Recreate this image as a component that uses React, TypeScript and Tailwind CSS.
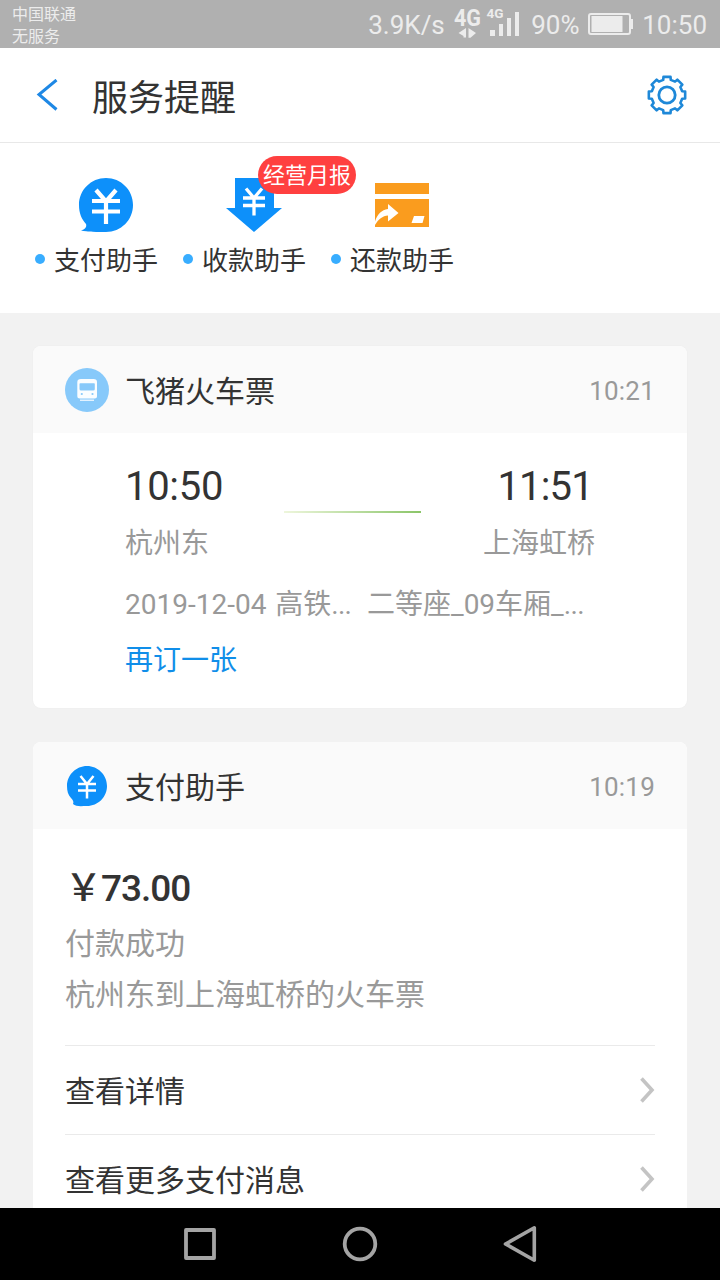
import type { ReactNode } from "react";

function PayIcon() {
  return (
    <svg className="h-14 w-14" viewBox="0 0 56 56" fill="none">
      <path d="M28 1C43 1 55 13 55 28S43 55 28 55C20 55 9 55 3 53.500C7 52.500 9 50 8 47C3.500 42 1 36 1 28C1 13 13 1 28 1Z" fill="#0d90fa" />
      <path d="M18 13 28 24.500 38 13M14 24H42M14 34.500H42M28 24V47" stroke="#fff" strokeWidth="4.200" />
    </svg>
  );
}

function PaySmallIcon() {
  return (
    <svg className="h-11 w-11" viewBox="0 0 44 44" fill="none">
      <path d="M22 2C33 2 42 11 42 22S33 42 22 42C17 42 11 43 8 40C9 38 8 36 6 34C3 31 2 27 2 22C2 11 11 2 22 2Z" fill="#0d90fa" />
      <path d="M15.500 12 22 20 28.500 12M13 20H31M13 26.500H31M22 20V34.500" stroke="#fff" strokeWidth="2.500" />
    </svg>
  );
}

function CollectIcon() {
  return (
    <svg className="h-14 w-14" viewBox="0 0 56 56" fill="none">
      <path d="M9 1H48V31H56L28 55 0 31H9Z" fill="#0d90fa" />
      <path d="M20 11.500 28 21 36 11.500M17 21H39M17 28.500H39M28 21V38.500" stroke="#fff" strokeWidth="3.300" />
    </svg>
  );
}

function RepayIcon() {
  return (
    <svg className="h-14 w-14" viewBox="0 0 56 56">
      <path d="M1 6H55V17H1Z" fill="#fa9c1e" />
      <path d="M1 22H55V50H1Z" fill="#fa9c1e" />
      <path d="M1 48V44.500C3.500 37 7.500 33 14 32V27L24.500 36 14 44.500V38.500C8.500 39 4.500 42 1 48Z" fill="#fff" />
      <path d="M40 39H50.500L48.500 46H37.500Z" fill="#fff" />
    </svg>
  );
}

function TrainIcon() {
  return (
    <svg className="h-11 w-11" viewBox="0 0 44 44">
      <circle cx="22" cy="22" r="22" fill="#87c9fa" />
      <path d="M12.300 14Q12.300 11 16 11H28.500Q32 11 32 14V28Q32 30.500 29.500 30.500H15Q12.300 30.500 12.300 28Z" fill="#fafdff" />
      <path d="M14.500 16Q14.500 15.200 15.300 15.200H29Q29.800 15.200 29.800 16V21Q29.800 22.600 28.200 22.600H16Q14.500 22.600 14.500 21Z" fill="#87c9fa" />
      <circle cx="16.800" cy="26" r="1.100" fill="#87c9fa" />
      <circle cx="27.500" cy="26" r="1.100" fill="#87c9fa" />
      <path d="M15 31.500H29V33H15Z" fill="#fafdff" opacity=".8" />
    </svg>
  );
}

function gearPoints() {
  const points: string[] = [];
  for (let k = 0; k < 8; k++) {
    for (const [offset, r] of [[-14, 15.6], [-11, 18.5], [11, 18.5], [14, 15.6]]) {
      const a = ((k * 45 + offset) * Math.PI) / 180;
      points.push(`${(20 + r * Math.sin(a)).toFixed(2)},${(20 - r * Math.cos(a)).toFixed(2)}`);
    }
  }
  return points.join(" ");
}

function GearIcon() {
  return (
    <svg className="h-10 w-10" viewBox="0 0 40 40" fill="none" stroke="#1e88d8" strokeWidth="2.600" strokeLinejoin="round">
      <polygon points={gearPoints()} />
      <circle cx="20" cy="20" r="8.200" strokeWidth="2.800" />
    </svg>
  );
}

function Chevron() {
  return (
    <svg className="h-[26px] w-4" viewBox="0 0 16 26" fill="none" stroke="#c4c4c4" strokeWidth="3.600">
      <path d="M2.500 1.500 13 13 2.500 24.500" />
    </svg>
  );
}

function StatusBar() {
  return (
    <div className="flex h-12 shrink-0 items-center bg-[#b0b0b0] pl-3 pr-[13px] text-[#ececec]">
      <div className="pt-[3px] text-[16px] leading-[22px]">
        <div>中国联通</div>
        <div>无服务</div>
      </div>
      <div className="ml-auto flex items-center text-[26px] leading-[30px]">
        <span className="w-[86px] whitespace-nowrap pt-0.5">3.9K/s</span>
        <svg className="h-12 w-[77px]" viewBox="0 0 77 48" fill="#ececec">
          <text x="0" y="25.500" fontSize="23" fontWeight="700" textLength="27" lengthAdjust="spacingAndGlyphs">4G</text>
          <path d="M4.500 33 12 28V37.500H9.500V36ZM22 33 14.500 28V37.800H16.500Z" />
          <text x="32.500" y="17.500" fontSize="12.500" fontWeight="700" textLength="17" lengthAdjust="spacingAndGlyphs">4G</text>
          <path d="M36 30H41V36H36ZM45 24H49V36H45ZM53 18H57V36H53ZM61 12H65V36H61Z" />
        </svg>
        <span className="w-[57px] whitespace-nowrap pt-0.5">90%</span>
        <svg className="h-6 w-[46px]" viewBox="0 0 46 24" fill="#ececec">
          <rect x="1" y="2" width="41" height="20" rx="2" fill="none" stroke="#ececec" strokeWidth="2" />
          <path d="M3.500 4H34.500V20H3.500ZM42 7H45V17H42Z" />
        </svg>
        <span className="ml-2 whitespace-nowrap pt-0.5">10:50</span>
      </div>
    </div>
  );
}

function Shortcut({ icon, label, badge }: { icon: ReactNode; label: string; badge?: string }) {
  return (
    <div className="w-[148px]">
      <div className="relative ml-[19px] flex w-[104px] justify-center">
        {icon}
        {badge && (
          <span className="absolute left-14 -top-[21px] flex h-[38px] w-[98px] items-center justify-center whitespace-nowrap rounded-full bg-[#ff4040] pt-0.5 text-[22px] leading-none text-white">
            {badge}
          </span>
        )}
      </div>
      <div className="mt-1 flex items-center">
        <span className="h-2.5 w-2.5 rounded-full bg-[#38adff]" />
        <span className="ml-[9px] whitespace-nowrap pt-1 text-[26px] leading-10">{label}</span>
      </div>
    </div>
  );
}

function CardHeader({ icon, title, time }: { icon: ReactNode; title: string; time: string }) {
  return (
    <div className="flex h-[87px] items-center bg-[#fafafa] pl-8 pr-8">
      {icon}
      <span className="ml-4 pt-[5px] text-[30px] leading-10">{title}</span>
      <span className="ml-auto pt-0.5 text-[26px] leading-10 tracking-[0.2px] text-[#999]">{time}</span>
    </div>
  );
}

function LinkRow({ label }: { label: string }) {
  return (
    <div className="mx-8 flex h-[89px] items-center justify-between border-t border-[#eaeaea]">
      <span className="pt-[3px] text-[30px] leading-10">{label}</span>
      <Chevron />
    </div>
  );
}

export default function App() {
  return (
    <div className="flex h-[1280px] w-[720px] flex-col overflow-hidden bg-[#f2f2f2] font-['Roboto','Noto_Sans_CJK_SC',sans-serif] text-[#333]">
      <StatusBar />
      <header className="flex h-[95px] shrink-0 items-center border-b border-[#e8e8e8] bg-white pl-9 pr-[33px]">
        <svg className="h-8 w-6" viewBox="0 0 24 32" fill="none" stroke="#1e88e5" strokeWidth="3">
          <path d="M20.500 1 3 15.500 20.500 30.500" />
        </svg>
        <h1 className="ml-8 pt-[7px] text-[36px] leading-[48px]">服务提醒</h1>
        <div className="ml-auto">
          <GearIcon />
        </div>
      </header>
      <nav className="flex h-[170px] shrink-0 bg-white pl-[35px] pt-[34px]">
        <Shortcut icon={<PayIcon />} label="支付助手" />
        <Shortcut icon={<CollectIcon />} label="收款助手" badge="经营月报" />
        <Shortcut icon={<RepayIcon />} label="还款助手" />
      </nav>
      <main className="min-h-0 flex-1 overflow-hidden px-[33px] pt-[33px]">
        <section className="h-[362px] overflow-hidden rounded-lg bg-white shadow-[0_0_2px_rgba(0,0,0,0.04)]">
          <CardHeader icon={<TrainIcon />} title="飞猪火车票" time="10:21" />
          <div className="pl-[92px]">
            <div className="flex pt-[29px]">
              <div className="w-[159px]">
                <div className="text-[40px] leading-[50px] tracking-[-0.3px]">10:50</div>
                <div className="mt-3 text-[28px] leading-10 text-[#999]">杭州东</div>
              </div>
              <div className="mt-[49px] h-0.5 w-[137px] bg-linear-to-r from-[#eef6dc] to-[#8bc568]" />
              <div className="w-[174px] text-right">
                <div className="pr-0.5 text-[40px] leading-[50px] tracking-[-0.8px]">11:51</div>
                <div className="mt-3 text-[28px] leading-10 text-[#999]">上海虹桥</div>
              </div>
            </div>
            <div className="mt-[21px] flex whitespace-nowrap text-[28px] leading-10 text-[#999]">
              <span className="w-[242px]">2019-12-04 <span className="ml-[2px]">高铁</span><span className="tracking-[-0.8px]">...</span></span>
              <span>二等座_09车厢_<span className="tracking-[-0.6px]">...</span></span>
            </div>
            <div className="mt-4 text-[28px] leading-10 text-[#108ee9]">再订一张</div>
          </div>
        </section>
        <section className="mt-[34px] overflow-hidden rounded-t-lg bg-white">
          <CardHeader icon={<PaySmallIcon />} title="支付助手" time="10:19" />
          <div className="h-[216px] px-8 pt-[35px]">
            <div className="text-[37px] font-medium leading-[50px] tracking-[-1px]">￥73.00</div>
            <div className="mt-1 text-[30px] leading-[51px] text-[#999]">
              <p>付款成功</p>
              <p>杭州东到上海虹桥的火车票</p>
            </div>
          </div>
          <LinkRow label="查看详情" />
          <LinkRow label="查看更多支付消息" />
        </section>
      </main>
      <footer className="flex h-[72px] shrink-0 items-center justify-center gap-[120px] bg-black">
        <svg className="h-10 w-10" viewBox="0 0 40 40" fill="none" stroke="#a4a4a4" strokeWidth="3.800" strokeLinejoin="round">
          <rect x="6" y="6" width="28" height="28" />
        </svg>
        <svg className="h-10 w-10" viewBox="0 0 40 40" fill="none" stroke="#a4a4a4" strokeWidth="3.800">
          <circle cx="20" cy="20" r="15.300" />
        </svg>
        <svg className="h-10 w-10" viewBox="0 0 40 40" fill="none" stroke="#a4a4a4" strokeWidth="3.600" strokeLinejoin="round">
          <path d="M34.300 3.800V36.200L5.500 20Z" />
        </svg>
      </footer>
    </div>
  );
}
